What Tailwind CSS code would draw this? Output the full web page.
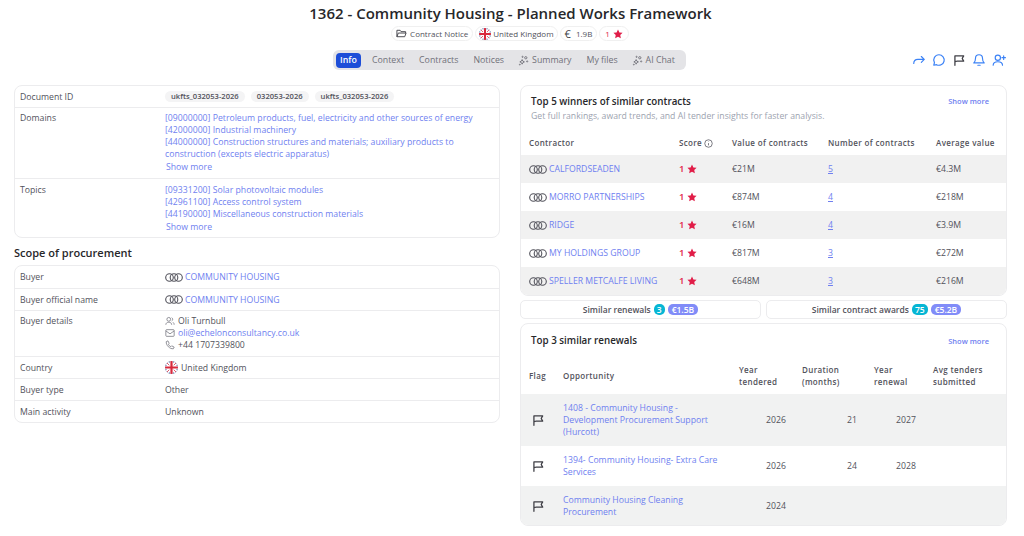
<!DOCTYPE html>
<html lang="en">
<head>
<meta charset="utf-8">
<script src="https://cdn.jsdelivr.net/npm/@tailwindcss/browser@4"></script>
<title>1362</title>
</head>
<body class="bg-white font-['Open_Sans','Noto_Sans',sans-serif] text-[8.7px] leading-[12px] text-[#52525b] w-[1024px] h-[536px] overflow-hidden">
<svg class="absolute w-0 h-0" xmlns="http://www.w3.org/2000/svg">
  <symbol id="rings" viewBox="0 0 18 9"><g fill="none" stroke="#52525b" stroke-width="1.1"><circle cx="4.5" cy="4.5" r="3.8"/><circle cx="9" cy="4.5" r="3.8"/><circle cx="13.5" cy="4.5" r="3.8"/></g></symbol>
  <symbol id="uk" viewBox="0 0 20 20"><rect width="20" height="20" fill="#2b3f87"/><path d="M0 2 18 20M20 2 2 20M2 0 20 18M18 0 0 18" stroke="#fff" stroke-width="3"/><path d="M0 0 20 20M20 0 0 20" stroke="#d8283c" stroke-width="1.2"/><path d="M10 0V20M0 10H20" stroke="#fff" stroke-width="6"/><path d="M10 0V20M0 10H20" stroke="#d8283c" stroke-width="3.4"/></symbol>
  <symbol id="star" viewBox="0 0 20 20"><path fill="#e11d48" d="M10 1l2.8 5.900 6.400.8-4.700 4.400 1.200 6.400L10 15.400l-5.700 3.100 1.200-6.400L.8 7.700l6.400-.8z"/></symbol>
  <symbol id="flag" viewBox="0 0 24 24"><path fill="none" stroke="currentColor" stroke-width="2.200" stroke-linecap="round" stroke-linejoin="round" d="M5 21V5h15l-2.500 4.500L20 14H9c-2 0-4 .5-4 2"/></symbol>
  <symbol id="spark" viewBox="0 0 24 24"><g fill="none" stroke="#71717a" stroke-width="2"><path d="M9 10l1.600 3.400L14 15l-3.400 1.600L9 20l-1.600-3.400L4 15l3.400-1.600z"/><circle cx="17" cy="6" r="2.500"/><circle cx="20" cy="14" r="1.300"/><circle cx="10" cy="4" r="1.300"/><circle cx="4" cy="21" r="1"/></g></symbol>
</svg>

<header class="flex flex-col items-center">
  <h1 class="mt-[3px] mr-[3px] text-[15px] leading-[20px] font-semibold text-[#27272a]">1362 - Community Housing - Planned Works Framework</h1>
  <div class="mt-[3px] mr-[4px] flex items-center gap-[2px] text-[8px] text-[#52525b]">
    <span class="flex items-center gap-[3px] h-[15px] px-[4px] rounded-full border border-[#f0f0f0]">
      <svg class="w-[11px] h-[11px]" viewBox="0 0 24 24" fill="none" stroke="#3f3f46" stroke-width="2"><path d="M2 19V5h7l2 3h10v3M2 19l3-8h17l-3 8z"/></svg>Contract Notice</span>
    <span class="flex items-center gap-[2px] h-[15px] px-[3px] rounded-full border border-[#f0f0f0]"><svg class="w-[12px] h-[12px] rounded-full"><use href="#uk"/></svg>United Kingdom</span>
    <span class="flex items-center gap-[5px] h-[15px] px-[4px] rounded-full border border-[#f0f0f0]"><span class="text-[11px] text-[#3f3f46]">€</span>1.9B</span>
    <span class="flex items-center gap-[3px] h-[15px] px-[5px] rounded-full border border-[#f0f0f0] text-[#e11d48]">1<svg class="w-[10px] h-[10px]"><use href="#star"/></svg></span>
  </div>
  <div class="mt-[9px] w-full grid grid-cols-[333px_353px_1fr] items-center">
    <div></div>
    <nav class="h-[20px] rounded-[6px] bg-[#e4e4e7] flex items-center pl-[3px] text-[8.8px] font-medium text-[#71717a] whitespace-nowrap">
      <span class="w-[25px] h-[15px] rounded-[4px] bg-[#1d4ed8] text-white font-semibold flex items-center justify-center">Info</span>
      <span class="ml-[11px]">Context</span>
      <span class="ml-[15px]">Contracts</span>
      <span class="ml-[15px]">Notices</span>
      <span class="ml-[14px] flex items-center gap-[3px]"><svg class="w-[11px] h-[11px]"><use href="#spark"/></svg>Summary</span>
      <span class="ml-[15px]">My files</span>
      <span class="ml-[14px] flex items-center gap-[3px]"><svg class="w-[11px] h-[11px]"><use href="#spark"/></svg>AI Chat</span>
    </nav>
    <div class="flex justify-end items-center gap-[6px] pr-[18px] text-[#3b82f6]">
      <svg class="w-[14px] h-[14px]" viewBox="0 0 24 24" fill="none" stroke="currentColor" stroke-width="2" stroke-linecap="round" stroke-linejoin="round"><path d="M3 18c0-5 3-7 7-7h11M16 6l5 5-5 5"/></svg>
      <svg class="w-[14px] h-[14px]" viewBox="0 0 24 24" fill="none" stroke="currentColor" stroke-width="2" stroke-linejoin="round"><path d="M12 3a9 9 0 1 1-4.200 17L3 21l1.200-4.500A9 9 0 0 1 12 3z"/></svg>
      <svg class="w-[14px] h-[14px] text-[#3f3f46]"><use href="#flag"/></svg>
      <svg class="w-[14px] h-[14px]" viewBox="0 0 24 24" fill="none" stroke="currentColor" stroke-width="2" stroke-linecap="round" stroke-linejoin="round"><path d="M6 9a6 6 0 0 1 12 0c0 6 3 8 3 8H3s3-2 3-8M10 21h4"/></svg>
      <svg class="w-[14px] h-[14px]" viewBox="0 0 24 24" fill="none" stroke="currentColor" stroke-width="2" stroke-linecap="round" stroke-linejoin="round"><circle cx="10" cy="8" r="4.500"/><path d="M2 21c0-4 3-6 8-6s8 2 8 6M20 5v6M17 8h6"/></svg>
    </div>
  </div>
</header>

<main class="mt-[15px] pl-[14px] pr-[17px] grid grid-cols-[486px_487px] gap-x-[20px] items-start">
  <section>
    <div class="rounded-[8px] border border-[#ececee] divide-y divide-[#ececee] h-[153px] flex flex-col">
      <div class="h-[22px] grid grid-cols-[145px_1fr] px-[5px] items-center">
        <span>Document ID</span>
        <span class="flex gap-[6px] text-[7.6px] font-semibold">
          <span class="px-[6px] h-[11px] leading-[11px] rounded-full bg-[#f4f4f5]">ukfts_032053-2026</span>
          <span class="px-[6px] h-[11px] leading-[11px] rounded-full bg-[#f4f4f5]">032053-2026</span>
          <span class="px-[6px] h-[11px] leading-[11px] rounded-full bg-[#f4f4f5]">ukfts_032053-2026</span>
        </span>
      </div>
      <div class="h-[71px] grid grid-cols-[145px_1fr] px-[5px] pt-[4px]">
        <span>Domains</span>
        <div class="text-[#6f7ff0]">
          <p>[09000000] Petroleum products, fuel, electricity and other sources of energy</p>
          <p>[42000000] Industrial machinery</p>
          <p>[44000000] Construction structures and materials; auxiliary products to<br>construction (excepts electric apparatus)</p>
          <p class="pl-[1px] mt-[1px]">Show more</p>
        </div>
      </div>
      <div class="flex-1 grid grid-cols-[145px_1fr] px-[5px] pt-[5px]">
        <span>Topics</span>
        <div class="text-[#6f7ff0]">
          <p>[09331200] Solar photovoltaic modules</p>
          <p>[42961100] Access control system</p>
          <p>[44190000] Miscellaneous construction materials</p>
          <p class="pl-[1px] mt-[1px]">Show more</p>
        </div>
      </div>
    </div>
    <h2 class="mt-[8px] text-[11px] leading-[14px] font-semibold text-[#27272a]">Scope of procurement</h2>
    <div class="mt-[5px] rounded-[8px] border border-[#ececee] divide-y divide-[#ececee] h-[158px] flex flex-col">
      <div class="h-[23px] grid grid-cols-[145px_1fr] px-[5px] items-center">
        <span>Buyer</span>
        <span class="flex items-center gap-[2px] text-[#6f7ff0]"><svg class="w-[18px] h-[9px]"><use href="#rings"/></svg>COMMUNITY HOUSING</span>
      </div>
      <div class="h-[22px] grid grid-cols-[145px_1fr] px-[5px] items-center">
        <span>Buyer official name</span>
        <span class="flex items-center gap-[2px] text-[#6f7ff0]"><svg class="w-[18px] h-[9px]"><use href="#rings"/></svg>COMMUNITY HOUSING</span>
      </div>
      <div class="h-[46px] grid grid-cols-[145px_1fr] px-[5px] pt-[4px]">
        <span>Buyer details</span>
        <div>
          <p class="flex items-center gap-[3px]"><svg class="w-[10px] h-[10px]" viewBox="0 0 24 24" fill="none" stroke="#71717a" stroke-width="1.8"><circle cx="9" cy="8" r="4.500"/><path d="M2 21c0-4 3-6 7-6s7 2 7 6M16 4a4.500 4.500 0 0 1 0 8M19 15c2 1 3 3 3 6"/></svg>Oli Turnbull</p>
          <p class="flex items-center gap-[3px] text-[#6f7ff0]"><svg class="w-[10px] h-[10px]" viewBox="0 0 24 24" fill="none" stroke="#71717a" stroke-width="1.8"><rect x="2" y="4" width="20" height="16" rx="2"/><path d="M2 7l10 7 10-7"/></svg>oli@echelonconsultancy.co.uk</p>
          <p class="flex items-center gap-[3px]"><svg class="w-[10px] h-[10px]" viewBox="0 0 24 24" fill="none" stroke="#71717a" stroke-width="1.8"><path d="M3 4l4-2 3 6-2 2c1 3 3 5 6 6l2-2 6 3-2 4C12 22 2 13 3 4z"/></svg>+44 1707339800</p>
        </div>
      </div>
      <div class="h-[22px] grid grid-cols-[145px_1fr] px-[5px] items-center">
        <span>Country</span>
        <span class="flex items-center gap-[3px]"><svg class="w-[13px] h-[13px] rounded-full"><use href="#uk"/></svg>United Kingdom</span>
      </div>
      <div class="h-[22px] grid grid-cols-[145px_1fr] px-[5px] items-center"><span>Buyer type</span><span>Other</span></div>
      <div class="flex-1 grid grid-cols-[145px_1fr] px-[5px] items-center"><span>Main activity</span><span>Unknown</span></div>
    </div>
  </section>

  <section>
    <div class="rounded-[8px] border border-[#ececee] h-[211px] overflow-hidden">
      <div class="flex justify-between pl-[10px] pr-[17px] pt-[9px]">
        <h3 class="text-[9.8px] leading-[13px] font-semibold text-[#27272a]">Top 5 winners of similar contracts</h3>
        <a class="text-[7.5px] leading-[13px] font-semibold text-[#6f7ff0]">Show more</a>
      </div>
      <p class="pl-[10px] mt-[2px] text-[#9ca3af]">Get full rankings, award trends, and AI tender insights for faster analysis.</p>
      <div class="mt-[8px] h-[25px] pt-[1px] grid grid-cols-[150px_53px_96px_108px_1fr] pl-[8px] items-center text-[8px] font-semibold tracking-[0.35px]">
        <span>Contractor</span>
        <span class="flex items-center gap-[2px]">Score<svg class="w-[9px] h-[9px]" viewBox="0 0 24 24" fill="none" stroke="#52525b" stroke-width="2"><circle cx="12" cy="12" r="10"/><path d="M12 11v6M12 7v1"/></svg></span>
        <span>Value of contracts</span><span>Number of contracts</span><span>Average value</span>
      </div>
      <div class="h-[28px] bg-[#f1f1f1] grid grid-cols-[150px_53px_96px_108px_1fr] pl-[8px] items-center">
        <span class="flex items-center gap-[2px] text-[#6f7ff0]"><svg class="w-[18px] h-[9px]"><use href="#rings"/></svg>CALFORDSEADEN</span>
        <span class="flex items-center gap-[3px] text-[#e11d48] text-[9.5px] font-semibold">1<svg class="w-[10px] h-[10px]"><use href="#star"/></svg></span>
        <span>€21M</span><span class="text-[#6f7ff0] underline">5</span><span>€4.3M</span>
      </div>
      <div class="h-[28px] grid grid-cols-[150px_53px_96px_108px_1fr] pl-[8px] items-center">
        <span class="flex items-center gap-[2px] text-[#6f7ff0]"><svg class="w-[18px] h-[9px]"><use href="#rings"/></svg>MORRO PARTNERSHIPS</span>
        <span class="flex items-center gap-[3px] text-[#e11d48] text-[9.5px] font-semibold">1<svg class="w-[10px] h-[10px]"><use href="#star"/></svg></span>
        <span>€874M</span><span class="text-[#6f7ff0] underline">4</span><span>€218M</span>
      </div>
      <div class="h-[28px] bg-[#f1f1f1] grid grid-cols-[150px_53px_96px_108px_1fr] pl-[8px] items-center">
        <span class="flex items-center gap-[2px] text-[#6f7ff0]"><svg class="w-[18px] h-[9px]"><use href="#rings"/></svg>RIDGE</span>
        <span class="flex items-center gap-[3px] text-[#e11d48] text-[9.5px] font-semibold">1<svg class="w-[10px] h-[10px]"><use href="#star"/></svg></span>
        <span>€16M</span><span class="text-[#6f7ff0] underline">4</span><span>€3.9M</span>
      </div>
      <div class="h-[28px] grid grid-cols-[150px_53px_96px_108px_1fr] pl-[8px] items-center">
        <span class="flex items-center gap-[2px] text-[#6f7ff0]"><svg class="w-[18px] h-[9px]"><use href="#rings"/></svg>MY HOLDINGS GROUP</span>
        <span class="flex items-center gap-[3px] text-[#e11d48] text-[9.5px] font-semibold">1<svg class="w-[10px] h-[10px]"><use href="#star"/></svg></span>
        <span>€817M</span><span class="text-[#6f7ff0] underline">3</span><span>€272M</span>
      </div>
      <div class="h-[28px] bg-[#f1f1f1] grid grid-cols-[150px_53px_96px_108px_1fr] pl-[8px] items-center">
        <span class="flex items-center gap-[2px] text-[#6f7ff0]"><svg class="w-[18px] h-[9px]"><use href="#rings"/></svg>SPELLER METCALFE LIVING</span>
        <span class="flex items-center gap-[3px] text-[#e11d48] text-[9.5px] font-semibold">1<svg class="w-[10px] h-[10px]"><use href="#star"/></svg></span>
        <span>€648M</span><span class="text-[#6f7ff0] underline">3</span><span>€216M</span>
      </div>
    </div>

    <div class="mt-[4px] grid grid-cols-[241px_241px] gap-x-[5px] text-[8.5px] font-semibold">
      <div class="h-[19px] rounded-[5px] border border-[#ececee] flex items-center justify-center gap-[3px]">Similar renewals
        <span class="h-[11px] px-[3px] leading-[11px] rounded-[5px] bg-[#06b6d4] text-white">3</span>
        <span class="h-[11px] px-[4px] leading-[11px] rounded-[5px] bg-[#818cf8] text-white">€1.5B</span></div>
      <div class="h-[19px] rounded-[5px] border border-[#ececee] flex items-center justify-center gap-[3px]">Similar contract awards
        <span class="h-[11px] px-[3px] leading-[11px] rounded-[5px] bg-[#06b6d4] text-white">75</span>
        <span class="h-[11px] px-[4px] leading-[11px] rounded-[5px] bg-[#818cf8] text-white">€5.2B</span></div>
    </div>

    <div class="mt-[4px] rounded-[8px] border border-[#ececee] h-[203px] overflow-hidden">
      <div class="flex justify-between pl-[10px] pr-[17px] pt-[10px]">
        <h3 class="text-[9.8px] leading-[13px] font-semibold text-[#27272a]">Top 3 similar renewals</h3>
        <a class="text-[7.5px] leading-[13px] font-semibold text-[#6f7ff0] mt-[1px]">Show more</a>
      </div>
      <div class="mt-[11px] h-[35px] pb-[2px] grid grid-cols-[34px_176px_63px_72px_59px_1fr] pl-[8px] items-center text-[8px] leading-[11.5px] font-semibold tracking-[0.35px]">
        <span>Flag</span><span>Opportunity</span><span>Year<br>tendered</span><span>Duration<br>(months)</span><span>Year<br>renewal</span><span>Avg tenders<br>submitted</span>
      </div>
      <div class="h-[52px] bg-[#f1f2f2] grid grid-cols-[34px_176px_63px_72px_59px_1fr] pl-[8px] items-center">
        <svg class="w-[14px] h-[14px] ml-[2px] text-[#3f3f46]"><use href="#flag"/></svg>
        <span class="text-[#6f7ff0]">1408 - Community Housing -<br>Development Procurement Support<br>(Hurcott)</span>
        <span class="pl-[27px]">2026</span><span class="pl-[45px]">21</span><span class="pl-[22px]">2027</span><span></span>
      </div>
      <div class="h-[40px] grid grid-cols-[34px_176px_63px_72px_59px_1fr] pl-[8px] items-center">
        <svg class="w-[14px] h-[14px] ml-[2px] text-[#3f3f46]"><use href="#flag"/></svg>
        <span class="text-[#6f7ff0]">1394- Community Housing- Extra Care<br>Services</span>
        <span class="pl-[27px]">2026</span><span class="pl-[45px]">24</span><span class="pl-[22px]">2028</span><span></span>
      </div>
      <div class="h-[40px] bg-[#f1f2f2] grid grid-cols-[34px_176px_63px_72px_59px_1fr] pl-[8px] items-center">
        <svg class="w-[14px] h-[14px] ml-[2px] text-[#3f3f46]"><use href="#flag"/></svg>
        <span class="text-[#6f7ff0]">Community Housing Cleaning<br>Procurement</span>
        <span class="pl-[27px]">2024</span><span></span><span></span><span></span>
      </div>
    </div>
  </section>
</main>
</body>
</html>
